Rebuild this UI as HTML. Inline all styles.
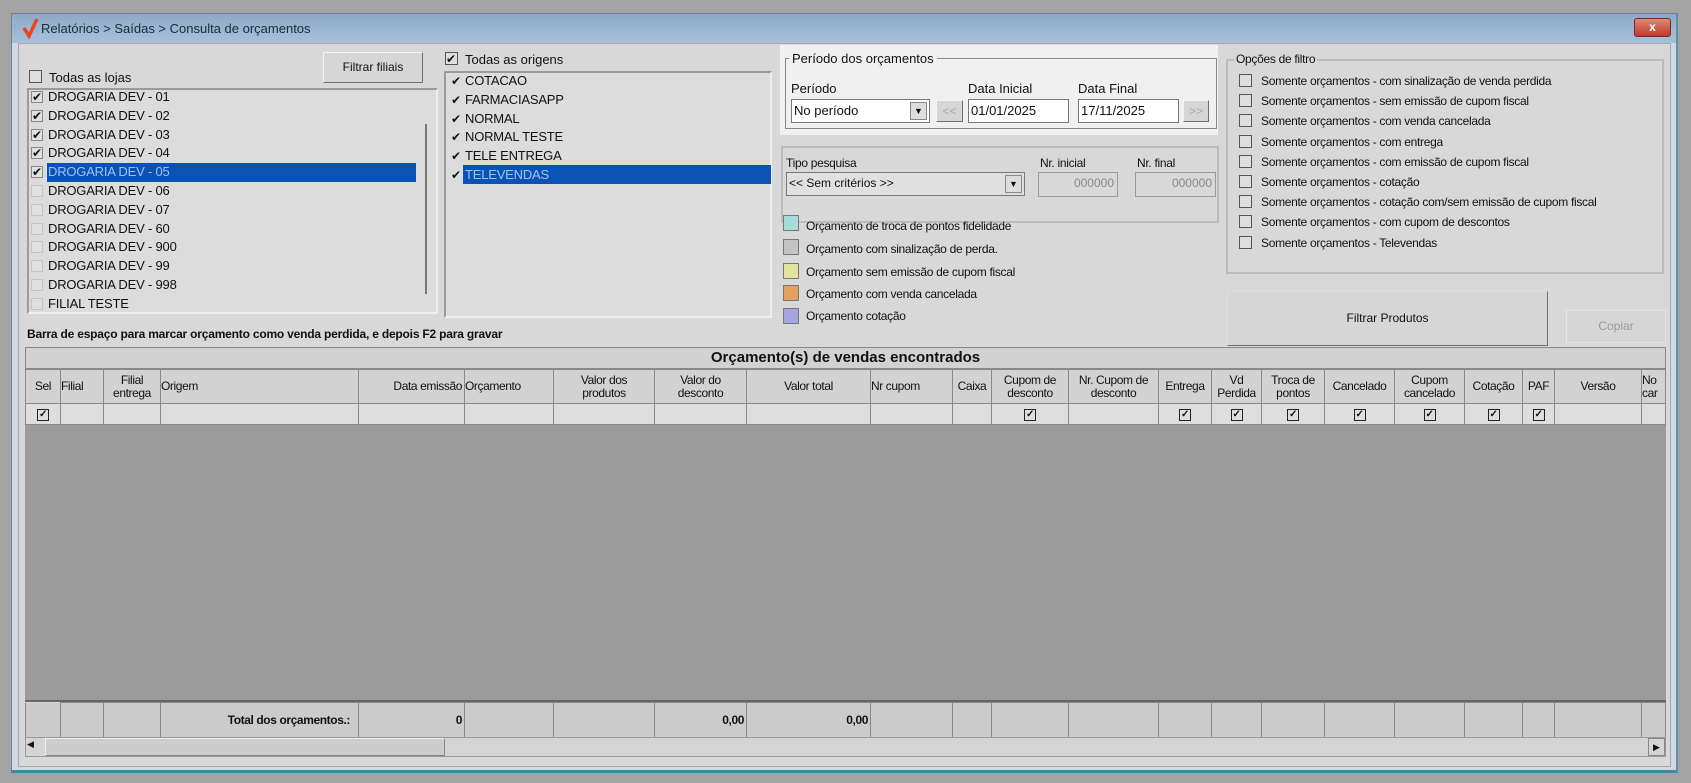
<!DOCTYPE html>
<html><head><meta charset="utf-8"><style>
*{margin:0;padding:0;box-sizing:border-box}
body{width:1691px;height:783px;background:#a3a3a3;font-family:"Liberation Sans",sans-serif;font-size:12px;color:#111;position:relative;overflow:hidden}
.a{position:absolute}
.win{left:11px;top:13px;width:1667px;height:760px;background:#cfd9e4;border:1px solid #6f7f90;border-bottom:3px solid #3f8aa0;border-right:2px solid #5a90a8}
.title{left:12px;top:14px;width:1664px;height:29px;background:linear-gradient(#8ea9c7,#a8c0da)}
.body{left:18px;top:43px;width:1653px;height:724px;background:#d8d8d8;border:1px solid #a8a8a8}
.cb{position:absolute;width:13px;height:13px;border:1px solid #555;background:#dedede}
.ck{position:absolute;font-size:12px;line-height:12px}
.list{background:#dcdcdc;border:2px solid #9a9a9a;border-right-color:#eee;border-bottom-color:#eee}
.row{position:absolute;height:18px;line-height:18px;font-size:13px;letter-spacing:-0.2px}
.sel{background:#0a52b4;color:#9fc2ff}
.btn{position:absolute;background:#d6d6d6;border:1px solid #f4f4f4;border-right-color:#707070;border-bottom-color:#707070;text-align:center}
.inp{position:absolute;background:#fff;border:1px solid #777;font-size:13px;line-height:21px;padding-left:2px}
.lbl{position:absolute;font-size:13px}
.sm{position:absolute;font-size:12px;letter-spacing:-0.3px}
.sw{position:absolute;width:16px;height:16px;border:1px solid #777}
table{border-collapse:collapse;table-layout:fixed;position:absolute}
td{border:1px solid #8a8a8a;font-size:12px;text-align:center;line-height:13px;overflow:hidden;letter-spacing:-0.4px;white-space:nowrap}
.gcb{display:inline-block;width:12px;height:12px;border:1.5px solid #222;font-size:10px;line-height:9px;font-weight:bold}
</style></head><body>
<div class="a win"></div>
<div class="a title"></div>
<svg class="a" style="left:22px;top:17px" width="18" height="22"><path d="M2 11 L7 19 L15 2" stroke="#e8461c" stroke-width="3.5" fill="none"/></svg>
<div class="a" style="left:41px;top:21px;font-size:13px;color:#1a2a3a">Relatórios &gt; Saídas &gt; Consulta de orçamentos</div>
<div class="a" style="left:1634px;top:18px;width:37px;height:19px;background:linear-gradient(#e08a78,#c0392b);border:1px solid #7a2a20;border-radius:3px;color:#fff;font-weight:bold;text-align:center;line-height:17px;font-size:12px">x</div>
<div class="a body"></div>

<!-- lojas -->
<div class="cb" style="left:29px;top:70px"></div>
<div class="lbl" style="left:49px;top:70px">Todas as lojas</div>
<div class="btn" style="left:323px;top:52px;width:100px;height:31px;line-height:29px;font-size:12px">Filtrar filiais</div>
<div class="a list" style="left:27px;top:88px;width:411px;height:226px"></div>
<div class="a" style="left:425px;top:124px;width:2px;height:170px;background:#777"></div>
<div class="a sel" style="left:47px;top:163px;width:369px;height:19px"></div>

<!-- origens -->
<div class="cb" style="left:445px;top:52px"><span class="ck" style="left:0;top:0">✔</span></div>
<div class="lbl" style="left:465px;top:52px">Todas as origens</div>
<div class="a list" style="left:444px;top:71px;width:328px;height:247px"></div>
<div class="a sel" style="left:463px;top:165px;width:308px;height:19px"></div>
<div id="lojas"></div>

<!-- periodo -->
<div class="a" style="left:780px;top:45px;width:438px;height:90px;background:#f0f0f0"></div>
<div class="a" style="left:785px;top:58px;width:432px;height:71px;border:1px solid #888"></div>
<div class="lbl" style="left:789px;top:51px;background:#f0f0f0;padding:0 3px">Período dos orçamentos</div>
<div class="lbl" style="left:791px;top:81px">Período</div>
<div class="lbl" style="left:968px;top:81px">Data Inicial</div>
<div class="lbl" style="left:1078px;top:81px">Data Final</div>
<div class="inp" style="left:791px;top:99px;width:139px;height:24px">No período<span class="a" style="right:2px;top:2px;width:17px;height:18px;background:#ddd;border:1px solid #888;font-size:9px;line-height:16px;text-align:center">▼</span></div>
<div class="btn" style="left:936px;top:100px;width:27px;height:22px;color:#aaa;line-height:20px">&lt;&lt;</div>
<div class="inp" style="left:968px;top:99px;width:101px;height:24px">01/01/2025</div>
<div class="inp" style="left:1078px;top:99px;width:101px;height:24px">17/11/2025</div>
<div class="btn" style="left:1183px;top:100px;width:26px;height:22px;color:#aaa;line-height:20px">&gt;&gt;</div>

<!-- tipo pesquisa -->
<div class="a" style="left:781px;top:146px;width:438px;height:77px;border:2px solid #bbb"></div>
<div class="sm" style="left:786px;top:156px">Tipo pesquisa</div>
<div class="sm" style="left:1040px;top:156px">Nr. inicial</div>
<div class="sm" style="left:1137px;top:156px">Nr. final</div>
<div class="inp" style="left:786px;top:172px;width:239px;height:24px;background:#e0e0e0;font-size:12px">&lt;&lt; Sem critérios &gt;&gt;<span class="a" style="right:2px;top:2px;width:17px;height:18px;background:#ddd;border:1px solid #888;font-size:9px;line-height:16px;text-align:center">▼</span></div>
<div class="inp" style="left:1038px;top:172px;width:80px;height:25px;background:#d8d8d8;border-color:#999;text-align:right;padding-right:3px;color:#888;font-size:12px">000000</div>
<div class="inp" style="left:1135px;top:172px;width:81px;height:25px;background:#d8d8d8;border-color:#999;text-align:right;padding-right:3px;color:#888;font-size:12px">000000</div>

<div class="sw" style="left:783px;top:215px;background:#a6dcdc"></div>
<div class="sw" style="left:783px;top:239px;background:#c4c4c4"></div>
<div class="sw" style="left:783px;top:263px;background:#e4e2a0"></div>
<div class="sw" style="left:783px;top:285px;background:#e4a060"></div>
<div class="sw" style="left:783px;top:308px;background:#a8a4e2"></div>
<div class="sm" style="left:806px;top:219px">Orçamento de troca de pontos fidelidade</div>
<div class="sm" style="left:806px;top:242px">Orçamento com sinalização de perda.</div>
<div class="sm" style="left:806px;top:265px">Orçamento sem emissão de cupom fiscal</div>
<div class="sm" style="left:806px;top:287px">Orçamento com venda cancelada</div>
<div class="sm" style="left:806px;top:309px">Orçamento cotação</div>

<!-- opcoes -->
<div class="a" style="left:1226px;top:59px;width:438px;height:215px;border:2px solid #bbb"></div>
<div class="sm" style="left:1234px;top:52px;background:#d8d8d8;padding:0 2px">Opções de filtro</div>
<div id="opc"></div>

<div class="btn" style="left:1227px;top:291px;width:321px;height:55px;line-height:53px;font-size:12px;border-top-color:#ddd;border-left-color:#ddd">Filtrar Produtos</div>
<div class="btn" style="left:1566px;top:310px;width:100px;height:33px;line-height:31px;color:#999;border-color:#e6e6e6">Copiar</div>

<div class="a" style="left:27px;top:327px;font-size:12px;font-weight:bold;letter-spacing:-0.2px">Barra de espaço para marcar orçamento como venda perdida, e depois F2 para gravar</div>

<!-- grid -->
<div class="a" style="left:25px;top:347px;width:1641px;height:22px;background:#d2d2d2;border:1px solid #888;text-align:center;font-weight:bold;font-size:15px;line-height:20px">Orçamento(s) de vendas encontrados</div>
<div class="a" style="left:25px;top:425px;width:1641px;height:276px;background:#9b9b9b"></div>
<table style="left:25px;top:369px;width:1641px">
<colgroup><col style="width:35px"><col style="width:43px"><col style="width:57px"><col style="width:198px"><col style="width:106px"><col style="width:89px"><col style="width:101px"><col style="width:92px"><col style="width:124px"><col style="width:82px"><col style="width:39px"><col style="width:77px"><col style="width:90px"><col style="width:53px"><col style="width:50px"><col style="width:63px"><col style="width:70px"><col style="width:70px"><col style="width:58px"><col style="width:32px"><col style="width:87px"><col style="width:24px"></colgroup>
<tr style="height:34px;background:#d2d2d2"><td>Sel</td><td style="text-align:left">Filial</td><td>Filial<br>entrega</td><td style="text-align:left">Origem</td><td style="text-align:right;padding-right:2px">Data emissão</td><td style="text-align:left">Orçamento</td><td>Valor dos<br>produtos</td><td>Valor do<br>desconto</td><td>Valor total</td><td style="text-align:left">Nr cupom</td><td>Caixa</td><td>Cupom de<br>desconto</td><td>Nr. Cupom de<br>desconto</td><td>Entrega</td><td>Vd<br>Perdida</td><td>Troca de<br>pontos</td><td>Cancelado</td><td>Cupom<br>cancelado</td><td>Cotação</td><td>PAF</td><td>Versão</td><td style="text-align:left">No<br>car</td></tr>
<tr style="height:21px;background:#dedede"><td><span class="gcb">✓</span></td><td></td><td></td><td></td><td></td><td></td><td></td><td></td><td></td><td></td><td></td><td><span class="gcb">✓</span></td><td></td><td><span class="gcb">✓</span></td><td><span class="gcb">✓</span></td><td><span class="gcb">✓</span></td><td><span class="gcb">✓</span></td><td><span class="gcb">✓</span></td><td><span class="gcb">✓</span></td><td><span class="gcb">✓</span></td><td></td><td></td></tr>
</table>
<div class="a" style="left:25px;top:700px;width:1641px;height:2px;background:#666"></div>
<table style="left:25px;top:702px;width:1641px">
<colgroup><col style="width:35px"><col style="width:43px"><col style="width:57px"><col style="width:198px"><col style="width:106px"><col style="width:89px"><col style="width:101px"><col style="width:92px"><col style="width:124px"><col style="width:82px"><col style="width:39px"><col style="width:77px"><col style="width:90px"><col style="width:53px"><col style="width:50px"><col style="width:63px"><col style="width:70px"><col style="width:70px"><col style="width:58px"><col style="width:32px"><col style="width:87px"><col style="width:24px"></colgroup>
<tr style="height:35px;background:#cbcbcb;font-weight:bold"><td style="border-top:0"></td><td></td><td></td><td style="font-weight:bold;text-align:right;padding-right:8px">Total dos orçamentos.:</td><td style="text-align:right;font-weight:bold;padding-right:2px">0</td><td></td><td></td><td style="text-align:right;font-weight:bold;padding-right:2px">0,00</td><td style="text-align:right;font-weight:bold;padding-right:2px">0,00</td><td></td><td></td><td></td><td></td><td></td><td></td><td></td><td></td><td></td><td></td><td></td><td></td><td></td></tr>
</table>
<div class="a" style="left:25px;top:737px;width:1641px;height:20px;background:#d4d4d4;border:1px solid #999"></div>
<div class="a" style="left:45px;top:738px;width:400px;height:18px;background:#cdcdcd;border:1px solid #f0f0f0;border-right-color:#888;border-bottom-color:#888"></div>
<div class="a" style="left:27px;top:739px;font-size:9px">◀</div>
<div class="a" style="left:1648px;top:738px;width:17px;height:18px;border:1px solid #888;font-size:9px;text-align:center;line-height:16px">▶</div>

<script>
var L=["DROGARIA DEV - 01","DROGARIA DEV - 02","DROGARIA DEV - 03","DROGARIA DEV - 04","DROGARIA DEV - 05","DROGARIA DEV - 06","DROGARIA DEV - 07","DROGARIA DEV - 60","DROGARIA DEV - 900","DROGARIA DEV - 99","DROGARIA DEV - 998","FILIAL TESTE"];
var h="";
L.forEach(function(t,i){var y=88+i*18.8;h+='<div class="cb" style="left:31px;top:'+(y+3)+'px;width:12px;height:12px;border-color:'+(i<5?'#888':'#c4c4c4')+';background:#e0e0e0">'+(i<5?'<span class="ck" style="left:0;top:-1px">✔</span>':'')+'</div><div class="row'+'" style="left:48px;top:'+y+'px;'+(i==4?'color:#9fc2ff':'')+'">'+t+'</div>';});
var O=["COTACAO","FARMACIASAPP","NORMAL","NORMAL TESTE","TELE ENTREGA","TELEVENDAS"];
O.forEach(function(t,i){var y=72+i*18.8;h+='<span class="ck a" style="left:451px;top:'+(y+3)+'px">✔</span><div class="row" style="left:465px;top:'+y+'px;'+(i==5?'color:#9fc2ff':'')+'">'+t+'</div>';});
document.getElementById("lojas").innerHTML=h;
var P=["com sinalização de venda perdida","sem emissão de cupom fiscal","com venda cancelada","com entrega","com emissão de cupom fiscal","cotação","cotação com/sem emissão de cupom fiscal","com cupom de descontos","Televendas"];
var g="";
P.forEach(function(t,i){var y=74+i*20.2;g+='<div class="cb" style="left:1239px;top:'+y+'px"></div><div class="sm" style="left:1261px;top:'+y+'px">Somente orçamentos - '+t+'</div>';});
document.getElementById("opc").innerHTML=g;
</script>
</body></html>
